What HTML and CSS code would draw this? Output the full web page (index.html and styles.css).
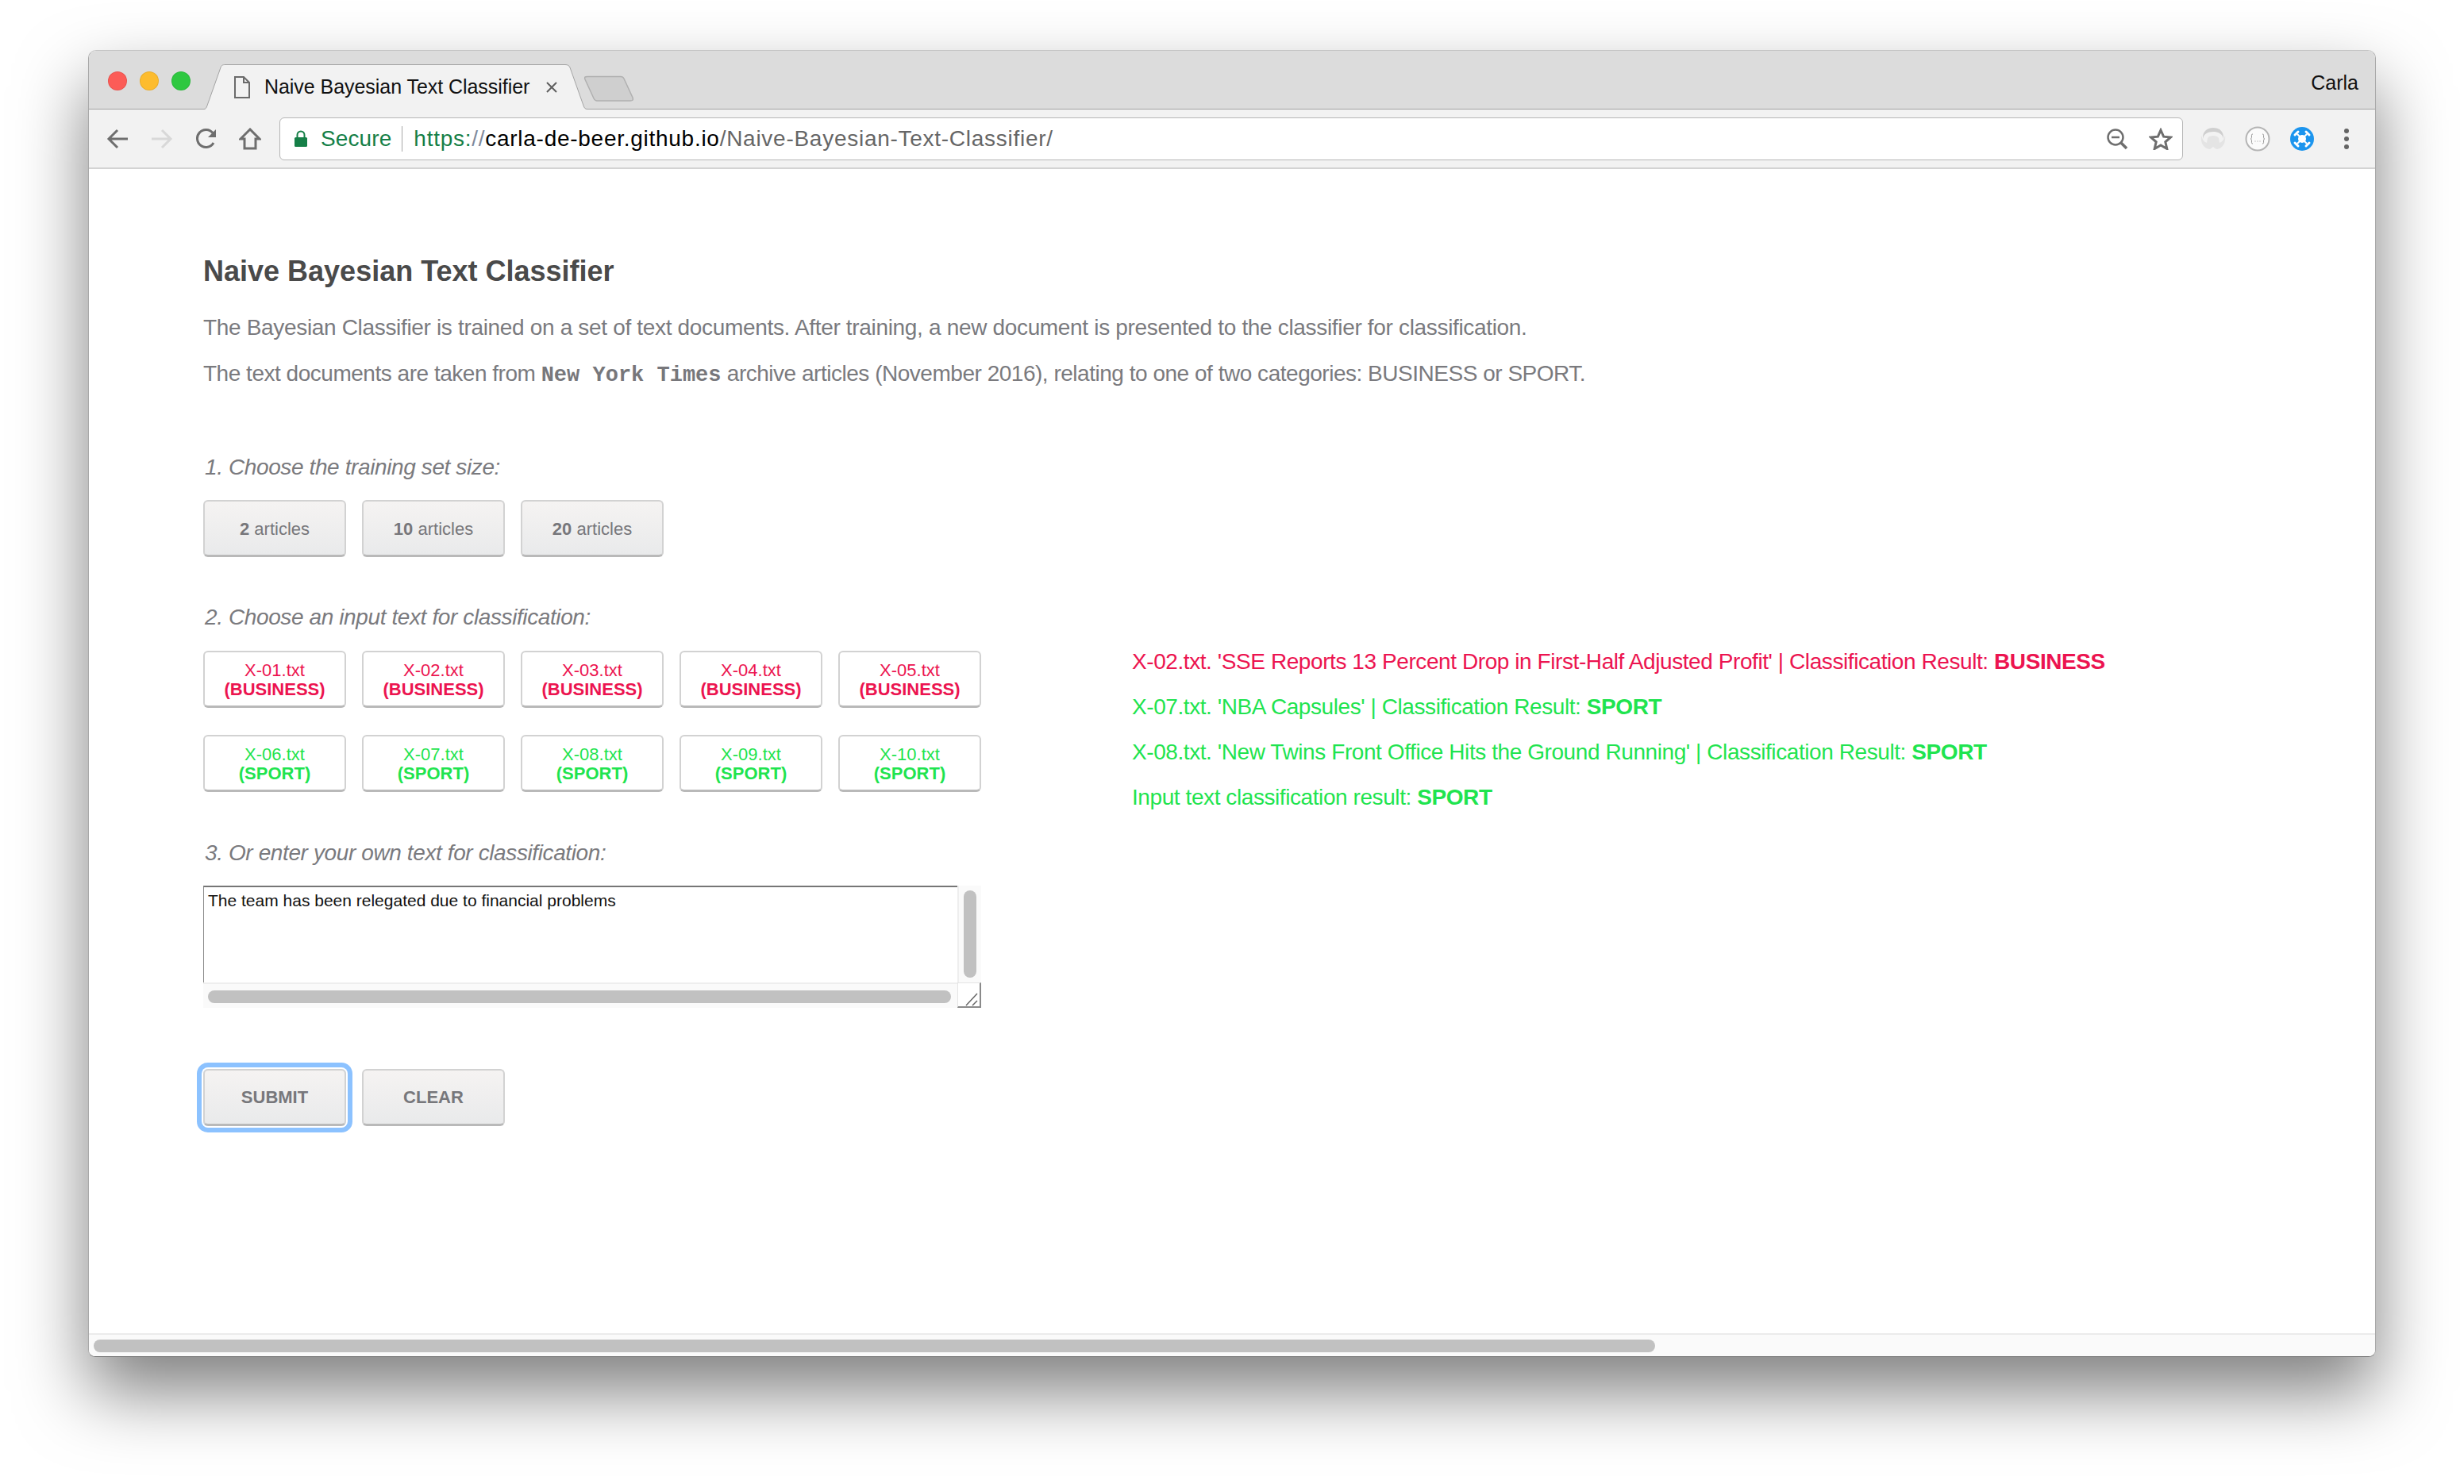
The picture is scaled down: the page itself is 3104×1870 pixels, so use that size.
FILE: index.html
```html
<!DOCTYPE html>
<html lang="en">
<head>
<meta charset="utf-8">
<title>Naive Bayesian Text Classifier</title>
<link rel="stylesheet" href="styles.css">
</head>
<body>
<div class="window">
  <header class="titlebar">
    <div class="lights"><span class="light red"></span><span class="light amber"></span><span class="light green"></span></div>
    <div class="tab">
      <svg class="tab-shape" width="486" height="57" viewBox="0 0 486 57"><path d="M0 56.5H1C3 56.5 4 55 5 52L22 4C23 1.500 24 .5 28 .5H456C459 .5 461 1.500 462 4L479 52C480 55 481 56.500 484 56.500H486V58H0Z" fill="#f2f2f2" stroke="#a3a3a3"/></svg>
      <svg class="file-icon" width="22" height="28" viewBox="0 0 22 28"><path d="M2 1H13L20 8V27H2ZM13 1V8H20" fill="none" stroke="#6b6b6b" stroke-width="2"/></svg>
      <span class="tab-title">Naive Bayesian Text Classifier</span>
      <svg class="tab-close" width="16" height="16" viewBox="0 0 16 16"><path d="M2 2L14 14M14 2L2 14" stroke="#5f5f5f" stroke-width="2"/></svg>
    </div>
    <svg class="newtab" width="66" height="34" viewBox="0 0 66 34"><path d="M3 5C2 2 3 1.500 6 1.500H48C50 1.500 51 2 52 4L63 28C64 31 63 32 60 32H18C16 32 15 31 14 29Z" fill="#cfcfcf" stroke="#b0b0b0" stroke-width="1.500"/></svg>
    <span class="user">Carla</span>
  </header>
  <nav class="toolbar">
    <svg class="nav-icon" width="28" height="28" viewBox="0 0 28 28"><path d="M27 14H3M14 3L3 14L14 25" fill="none" stroke="#6e6e6e" stroke-width="3"/></svg>
    <svg class="nav-icon" width="28" height="28" viewBox="0 0 28 28"><path d="M1 14H25M14 3L25 14L14 25" fill="none" stroke="#d8d8d8" stroke-width="3"/></svg>
    <svg class="nav-icon" width="28" height="28" viewBox="0 0 28 28"><path d="M23 19A11 11 0 1 1 22 6.500" fill="none" stroke="#6e6e6e" stroke-width="3"/><path d="M26 2V12H16Z" fill="#6e6e6e"/></svg>
    <svg class="nav-icon" width="28" height="28" viewBox="0 0 28 28"><path d="M14 2L2 14H7V26H21V14H26Z" fill="none" stroke="#6e6e6e" stroke-width="3"/></svg>
    <div class="omnibox">
      <svg class="lock" width="18" height="22" viewBox="0 0 18 22"><path d="M4.500 9V6A4.500 4.500 0 0 1 13.500 6V9" fill="none" stroke="#157f47" stroke-width="2"/><rect x="1" y="9" width="16" height="12" rx="1.500" fill="#157f47"/></svg>
      <span class="secure">Secure</span>
      <span class="sep"></span>
      <span class="url"><span class="scheme">https:</span><span class="slashes">//</span><span class="host">carla-de-beer.github.io</span><span class="path">/Naive-Bayesian-Text-Classifier/</span></span>
      <svg class="omni-zoom" width="28" height="28" viewBox="0 0 28 28"><circle cx="12" cy="12" r="9.500" fill="none" stroke="#6e6e6e" stroke-width="2.500"/><path d="M7 12H17" stroke="#6e6e6e" stroke-width="2.500"/><path d="M18.500 18.500L26 26" stroke="#6e6e6e" stroke-width="3.500"/></svg>
      <svg class="omni-star" width="30" height="28" viewBox="0 0 30 28"><path d="M15 3L18.600 11.200L27.500 12L20.800 17.900L22.800 26.500L15 22L7.200 26.500L9.200 17.900L2.500 12L11.400 11.200Z" fill="none" stroke="#6e6e6e" stroke-width="3" stroke-linejoin="miter"/></svg>
    </div>
    <svg class="ext ext-wing" width="32" height="28" viewBox="0 0 32 28"><path d="M16 0C8 0 3 5 3 12V14C4 8 9 5 16 5S28 8 29 14V12C29 5 24 0 16 0Z" fill="#cfcfcf"/><path d="M1 10C0 18 3 26 12 27L16 24L20 27C29 26 32 18 31 10C29 16 27 18 24 19L23 13C21 9 11 9 9 13L8 19C5 18 3 16 1 10Z" fill="#e4e4e4"/></svg>
    <svg class="ext ext-json" width="32" height="32" viewBox="0 0 32 32"><circle cx="16" cy="16" r="14.500" fill="#fbfbfb" stroke="#b4b4b4" stroke-width="2"/><path d="M10 10C8 10 8.500 11 8.500 13S8 16 7 16C8 16 8.500 17 8.500 19S8 22 10 22M22 10C24 10 23.500 11 23.500 13S24 16 25 16C24 16 23.500 17 23.500 19S24 22 22 22" fill="none" stroke="#9a9a9a"/><path d="M12.500 19H13.500M15.500 19H16.500M18.500 19H19.500" stroke="#9a9a9a"/></svg>
    <svg class="ext ext-blue" width="30" height="30" viewBox="0 0 30 30"><circle cx="15" cy="15" r="15" fill="#1c95ee"/><path d="M9 9L21 21M21 9L9 21" stroke="#fff" stroke-width="2"/><circle cx="15" cy="15" r="5" fill="#fff"/><path d="M6 10L10 6M20 6L24 10M6 20L10 24M20 24L24 20" stroke="#fff" stroke-width="3" stroke-linecap="round"/></svg>
    <div class="kebab"><span></span><span></span><span></span></div>
  </nav>

  <main class="content">
    <h1 class="heading">Naive Bayesian Text Classifier</h1>
    <p class="intro">The Bayesian Classifier is trained on a set of text documents. After training, a new document is presented to the classifier for classification.</p>
    <p class="intro second">The text documents are taken from <code class="nyt">New York Times</code> archive articles (November 2016), relating to one of two categories: BUSINESS or SPORT.</p>

    <p class="step first-step">1. Choose the training set size:</p>
    <div class="btn-row">
      <button class="btn"><b>2</b> articles</button>
      <button class="btn"><b>10</b> articles</button>
      <button class="btn"><b>20</b> articles</button>
    </div>

    <div class="columns">
      <section class="left">
        <p class="step">2. Choose an input text for classification:</p>
        <div class="btn-row doc-row">
          <button class="btn doc business">X-01.txt<br><b>(BUSINESS)</b></button>
          <button class="btn doc business">X-02.txt<br><b>(BUSINESS)</b></button>
          <button class="btn doc business">X-03.txt<br><b>(BUSINESS)</b></button>
          <button class="btn doc business">X-04.txt<br><b>(BUSINESS)</b></button>
          <button class="btn doc business">X-05.txt<br><b>(BUSINESS)</b></button>
        </div>
        <div class="btn-row doc-row second-docs">
          <button class="btn doc sport">X-06.txt<br><b>(SPORT)</b></button>
          <button class="btn doc sport">X-07.txt<br><b>(SPORT)</b></button>
          <button class="btn doc sport">X-08.txt<br><b>(SPORT)</b></button>
          <button class="btn doc sport">X-09.txt<br><b>(SPORT)</b></button>
          <button class="btn doc sport">X-10.txt<br><b>(SPORT)</b></button>
        </div>
        <p class="step third-step">3. Or enter your own text for classification:</p>
        <div class="textbox">
          <div class="text-area">The team has been relegated due to financial problems</div>
          <div class="v-track"><span class="v-thumb"></span></div>
          <div class="h-track"><span class="h-thumb"></span></div>
          <div class="grip"><svg width="20" height="20" viewBox="0 0 20 20"><path d="M3 19L17 4M11 19L17 13" stroke="#666" stroke-width="1.500" fill="none"/></svg></div>
        </div>
        <div class="btn-row actions">
          <button class="btn action focused">SUBMIT</button>
          <button class="btn action">CLEAR</button>
        </div>
      </section>
      <section class="results">
        <p class="result business">X-02.txt. 'SSE Reports 13 Percent Drop in First-Half Adjusted Profit' | Classification Result: <b>BUSINESS</b></p>
        <p class="result sport">X-07.txt. 'NBA Capsules' | Classification Result: <b>SPORT</b></p>
        <p class="result sport">X-08.txt. 'New Twins Front Office Hits the Ground Running' | Classification Result: <b>SPORT</b></p>
        <p class="result sport">Input text classification result: <b>SPORT</b></p>
      </section>
    </div>
  </main>

  <div class="page-scroll"><span class="page-thumb"></span></div>
</div>
</body>
</html>
```
FILE: styles.css
```css
* { box-sizing: border-box; }
html, body { margin: 0; padding: 0; background: #fff; }
body { width: 3104px; height: 1870px; padding: 63px 111px 160px 111px; overflow: hidden; font-family: "Liberation Sans", Arial, sans-serif; }

.window { display: flex; flex-direction: column; width: 2882px; height: 1647px; background: #fff; border: 1px solid #a9a9a9; border-top-color: #c4c4c4; border-bottom-color: #6e6e6e; border-radius: 10px 10px 9px 9px; box-shadow: 0 44px 88px rgba(0,0,0,.5); overflow: hidden; }

.titlebar { display: flex; align-items: flex-end; height: 74px; flex: none; background: #dcdcdc; border-bottom: 1px solid #a3a3a3; position: relative; }
.lights { display: flex; gap: 16px; align-self: flex-start; padding: 26px 0 0 24px; width: 144px; }
.light { width: 24px; height: 24px; border-radius: 50%; border: 1px solid rgba(0,0,0,.08); }
.light.red { background: #fc5c57; }
.light.amber { background: #fdbc2e; }
.light.green { background: #2ec840; }

.tab { position: relative; z-index: 1; width: 486px; height: 57px; margin-bottom: -1px; display: flex; align-items: center; padding: 0 0 0 38px; }
.tab-shape { position: absolute; left: 0; top: 0; }
.file-icon, .tab-title, .tab-close { position: relative; }
.tab-title { margin-left: 17px; font-family: "Liberation Sans", sans-serif; font-size: 25px; color: #111; white-space: nowrap; letter-spacing: -.05px; }
.tab-close { margin-left: 20px; }
.newtab { margin: 0 0 8px -8px; flex: none; }
.user { margin-left: auto; align-self: flex-start; padding: 25px 21px 0 0; font-size: 25px; line-height: 30px; color: #111; }

.toolbar { display: flex; align-items: center; height: 75px; flex: none; background: #f2f2f2; border-bottom: 2px solid #d3d3d3; padding-left: 22px; }
.nav-icon { flex: none; margin-right: 28px; }
.nav-icon:nth-child(3) { margin-right: 27px; }
.nav-icon:nth-child(4) { margin-right: 23px; }
.omnibox { display: flex; align-items: center; width: 2398px; height: 54px; margin-right: 22px; background: #fff; border: 1px solid #b5b5b5; border-radius: 6px; padding: 0 12px 0 17px; font-size: 28px; white-space: nowrap; }
.secure { margin-left: 16px; color: #157f47; font-size: 28px; letter-spacing: .1px; }
.sep { width: 1px; height: 32px; margin: 0 14px 0 13px; background: #a8a8a8; }
.url { letter-spacing: .73px; }
.scheme { color: #157f47; }
.slashes { color: #7f8a9c; }
.host { color: #000; }
.path { color: #666; }
.omni-zoom { margin-left: auto; }
.omni-star { margin-left: 26px; }
.ext { flex: none; }
.ext-json { margin-left: 24px; }
.ext-blue { margin-left: 25px; }
.kebab { display: flex; flex-direction: column; gap: 4px; margin-left: 38px; }
.kebab span { width: 6px; height: 6px; border-radius: 50%; background: #646464; }

.content { flex: 1; min-height: 0; padding: 109px 0 0 144px; color: #7a7a7e; }
.heading { margin: 0 0 31px; font-size: 36px; line-height: 40px; font-weight: 700; color: #4a4a4a; }
.intro { margin: 0; font-size: 28px; line-height: 40px; color: #7a7a7e; white-space: nowrap; letter-spacing: -.33px; }
.intro.second { margin-top: 18px; letter-spacing: -.48px; }
.nyt { font-family: "Liberation Mono", monospace; font-weight: 700; font-size: 27px; letter-spacing: 0; color: #77777b; }
.step { margin: 0; font-size: 28px; line-height: 40px; font-style: italic; color: #7a7a7e; letter-spacing: -.39px; padding-left: 2px; }
.first-step { margin-top: 76px; }
.third-step { margin-top: 57px; }

.btn-row { display: flex; gap: 20px; margin-top: 21px; }
.btn { width: 180px; height: 72px; padding: 2px 0 0; border: 2px solid #d2d2d2; border-bottom: 3px solid #b9b9b9; border-radius: 6px; background: linear-gradient(#f5f3f2, #e9eaeb); font-family: inherit; font-size: 22px; line-height: 24px; color: #77777b; }
.doc { background: #fff; }
.business { color: #ec1450; }
.sport { color: #1fe44f; }
.doc-row { margin-top: 22px; }
.doc-row.second-docs { margin-top: 34px; }
.action { font-weight: 700; padding: 0; }
.btn-row.actions { margin-top: 77px; }
.focused { box-shadow: 0 0 0 2px #fff, 0 0 0 8px #8cc2ff; }

.columns { display: flex; margin-top: 56px; }
.left { width: 1170px; flex: none; }
.results { padding-top: 56px; }
.result { margin: 0 0 17px; font-size: 28px; line-height: 40px; white-space: nowrap; letter-spacing: -.42px; }

.textbox { display: grid; grid-template-columns: 950px 30px; grid-template-rows: 122px 32px; width: 980px; margin-top: 21px; }
.text-area { border-top: 2px solid #767676; border-left: 1px solid #8a8a8a; padding: 5px 5px; font-size: 21px; line-height: 24px; color: #111; background: #fff; }
.v-track { background: #fafafa; border-left: 2px solid #eee; padding: 6px 0 0 6px; }
.v-thumb { display: block; width: 16px; height: 110px; border-radius: 8px; background: #c1c1c1; }
.h-track { background: #fafafa; border-top: 2px solid #eee; padding: 8px 0 0 6px; }
.h-thumb { display: block; width: 936px; height: 16px; border-radius: 8px; background: #c1c1c1; }
.grip { background: #fff; border: 1px solid #e4e4e4; border-right: 2px solid #8a8a8a; border-bottom: 2px solid #8a8a8a; display: flex; align-items: flex-end; justify-content: flex-end; }
.grip svg { display: block; }

.page-scroll { flex: none; height: 29px; background: #fafafa; border-top: 2px solid #ebebeb; padding: 6px 0 0 6px; }
.page-thumb { display: block; width: 1967px; height: 16px; border-radius: 8px; background: #c1c1c1; }
```
